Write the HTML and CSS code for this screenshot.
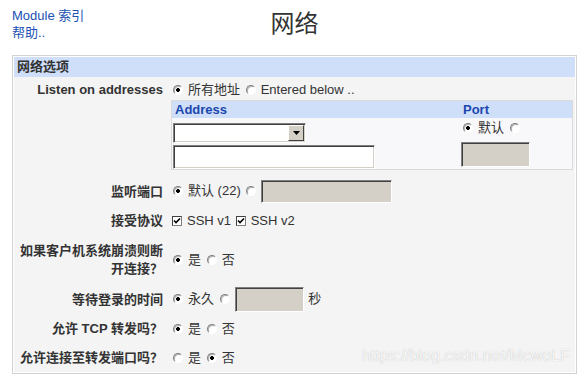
FILE: index.html
```html
<!DOCTYPE html>
<html lang="zh">
<head>
<meta charset="UTF-8">
<title>网络</title>
<link rel="stylesheet" href="styles.css">
</head>
<body>
<div class="top">
  <div class="links">
    <a href="#">Module 索引</a><br>
    <a href="#">帮助..</a>
  </div>
  <h1 class="title">网络</h1>
  <div></div>
</div>

<div class="panel">
  <div class="panel-head">网络选项</div>
  <div class="form">
    <div class="label top">Listen on addresses</div>
    <div class="value top">
      <div class="line"><input type="radio" name="listen" checked>所有地址 <input type="radio" name="listen">Entered below ..</div>
      <div class="addr">
        <div class="addr-head">Address</div>
        <div class="addr-head">Port</div>
        <div class="addr-cell">
          <div class="select"><span class="select-field"></span><span class="select-btn"></span></div>
          <input type="text" class="text wide">
        </div>
        <div class="port-cell">
          <div class="line small"><input type="radio" name="port" checked>默认 <input type="radio" name="port"></div>
          <input type="text" class="text short off" disabled>
        </div>
      </div>
    </div>

    <div class="label">监听端口</div>
    <div class="value"><span><input type="radio" name="lport" checked>默认 (22) <input type="radio" name="lport"><input type="text" class="text mid off" disabled></span></div>

    <div class="label">接受协议</div>
    <div class="value"><span><input type="checkbox" checked>SSH v1 <input type="checkbox" checked>SSH v2</span></div>

    <div class="label two">如果客户机系统崩溃则断开连接？</div>
    <div class="value"><span><input type="radio" name="crash" checked>是 <input type="radio" name="crash">否</span></div>

    <div class="label">等待登录的时间</div>
    <div class="value"><span><input type="radio" name="wait" checked>永久 <input type="radio" name="wait"><input type="text" class="text short off" disabled> <span class="unit">秒</span></span></div>

    <div class="label">允许 TCP 转发吗？</div>
    <div class="value"><span><input type="radio" name="tcp" checked>是 <input type="radio" name="tcp">否</span></div>

    <div class="label">允许连接至转发端口吗？</div>
    <div class="value"><span><input type="radio" name="gw">是 <input type="radio" name="gw" checked>否</span></div>
  </div>
  <div class="watermark">https://blog.csdn.net/McwoLF</div>
</div>
</body>
</html>
```

FILE: styles.css
```css
body {
  margin: 0;
  padding: 7px 4px 0 12px;
  font-family: "Liberation Sans", "Noto Sans CJK SC", sans-serif;
  font-size: 13px;
  color: #333;
  background-color: white;
}
.top {
  display: grid;
  grid-template-columns: 1fr auto 1fr;
  align-items: start;
}
.links {
  line-height: 17px;
}
.links a {
  color: #2150b4;
  text-decoration: none;
}
.title {
  margin: 5px 0 0;
  font-size: 24px;
  font-weight: normal;
  line-height: 24px;
  color: #333;
}
.panel {
  position: relative;
  margin-top: 14px;
  border: 1px solid #d3d3d3;
  padding: 1px;
  background-color: white;
}
.panel-head {
  height: 20px;
  line-height: 20px;
  padding-left: 3px;
  background-color: #cfdffa;
  font-weight: bold;
}

/* form rows */
.form {
  display: grid;
  grid-template-columns: 157px 1fr;
  background-color: #f4f4f4;
  line-height: 18px;
}
.label {
  display: flex;
  align-items: center;
  justify-content: flex-end;
  min-height: 29px;
  padding-right: 8px;
  text-align: right;
  font-weight: bold;
}
.label.two {
  min-height: 50px;
}
.value {
  display: flex;
  align-items: center;
  min-height: 29px;
  white-space: nowrap;
}
.label.top {
  align-items: flex-start;
  padding-top: 4px;
}
.value.top {
  display: block;
  padding: 4px 0 7px;
}
.line {
  height: 18px;
}
.line.small {
  height: 16px;
  line-height: 16px;
}

/* classic windows controls */
input[type="radio"] {
  appearance: none;
  -webkit-appearance: none;
  width: 10px;
  height: 10px;
  margin: 0 5px 0 2px;
  border: 1px solid #808080;
  border-right-color: #fff;
  border-bottom-color: #fff;
  border-radius: 50%;
  background-color: #fff;
  box-shadow: inset 1px 1px 0 #b0b0b0;
  vertical-align: -1px;
}
input[type="radio"]:checked {
  background: radial-gradient(circle, #000 0 1.6px, #fff 2.2px);
}
input[type="checkbox"] {
  appearance: none;
  -webkit-appearance: none;
  width: 10px;
  height: 10px;
  margin: 0 5px 0 1px;
  border: 1px solid #404040;
  border-right-color: #808080;
  border-bottom-color: #808080;
  background-color: #fff;
  vertical-align: -1px;
}
input[type="checkbox"]:checked {
  background: #fff url("data:image/svg+xml;utf8,<svg xmlns='http://www.w3.org/2000/svg' width='8' height='8' viewBox='0 0 8 8'><path d='M1 3.5 L3 5.5 L7 1.5' fill='none' stroke='black' stroke-width='1.6'/></svg>") no-repeat center;
}
.text {
  box-sizing: border-box;
  margin: 0;
  padding: 0 2px;
  border: 1px solid #808080;
  border-right-color: #fff;
  border-bottom-color: #fff;
  box-shadow: inset 1px 1px 0 #404040, inset -1px -1px 0 #d4d0c8;
  background-color: #fff;
  font: inherit;
  vertical-align: middle;
}
.text.off {
  background-color: #d4d0c8;
}
.text.wide {
  display: block;
  width: 202px;
  height: 24px;
  margin-top: 2px;
}
.text.short {
  width: 69px;
  height: 25px;
}
.text.mid {
  width: 131px;
  height: 23px;
}
.port-cell .text {
  display: block;
  margin-top: 6px;
}
.unit {
  margin-left: 1px;
}

.select {
  box-sizing: border-box;
  display: flex;
  width: 133px;
  height: 20px;
  margin-top: 5px;
  border: 1px solid #808080;
  border-right-color: #fff;
  border-bottom-color: #fff;
  box-shadow: inset 1px 1px 0 #404040, inset -1px -1px 0 #d4d0c8;
  padding: 2px;
  background-color: #fff;
}
.select-field {
  flex: 1;
}
.select-btn {
  box-sizing: border-box;
  width: 16px;
  border: 1px solid #fff;
  border-right-color: #404040;
  border-bottom-color: #404040;
  background: #d4d0c8 url("data:image/svg+xml;utf8,<svg xmlns='http://www.w3.org/2000/svg' width='7' height='4' viewBox='0 0 7 4'><path d='M0 0 H7 L3.5 4 Z' fill='black'/></svg>") no-repeat center;
  margin: -1px -1px -1px 0;
}

/* address table */
.addr {
  display: grid;
  grid-template-columns: 288px 1fr;
  box-sizing: border-box;
  width: 402px;
  margin-top: 1px;
  border: 1px solid #dadada;
  background-color: #f8f8fa;
}
.addr-head {
  height: 17px;
  padding: 0 3px;
  line-height: 17px;
  font-weight: bold;
  color: #1c47ad;
  background-color: #cfdffa;
}
.addr-cell {
  padding: 0 1px;
}
.port-cell {
  padding: 2px 1px 0;
}

.watermark {
  position: absolute;
  right: 6px;
  bottom: 8px;
  font-size: 16px;
  color: rgba(255, 255, 255, 0.85);
  text-shadow: 0 0 1px #b8b8b8;
}
```
